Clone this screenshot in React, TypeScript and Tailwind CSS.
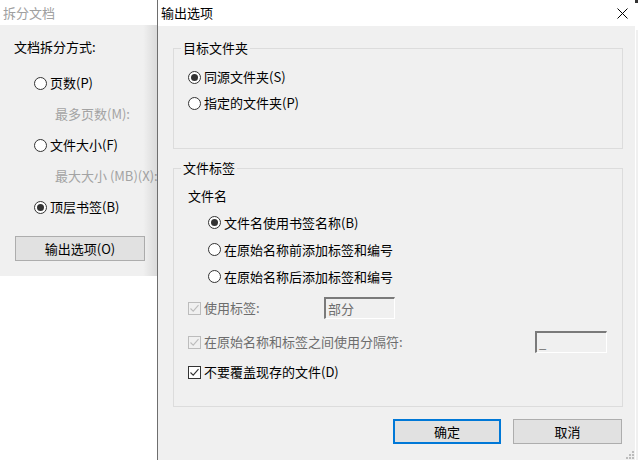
import React from "react";

const F = "[font-family:'Microsoft_YaHei','Noto_Sans_CJK_SC',sans-serif]";

function Radio({ checked }: { checked?: boolean }) {
  return (
    <span className="w-[13px] h-[13px] rounded-full border border-[#333333] bg-white flex items-center justify-center shrink-0">
      {checked && <span className="w-[7px] h-[7px] rounded-full bg-[#333333]" />}
    </span>
  );
}

function Check({ disabled }: { disabled?: boolean }) {
  const c = disabled ? "#bcbcbc" : "#333333";
  return (
    <span
      className={
        "w-[13px] h-[13px] border flex items-center justify-center shrink-0 " +
        (disabled ? "border-[#bcbcbc] bg-[#f0f0f0]" : "border-[#333333] bg-white")
      }
    >
      <svg width="11" height="11" viewBox="0 0 11 11">
        <path d="M1.5 5.5 L4.2 8.2 L9.5 2.2" stroke={c} fill="none" strokeWidth="1.1" />
      </svg>
    </span>
  );
}

function Group({
  title,
  className,
  children,
}: {
  title: string;
  className: string;
  children: React.ReactNode;
}) {
  return (
    <div className={"relative border border-[#dcdcdc] " + className}>
      <span className="absolute top-[-9px] left-[7px] px-[2px] h-[16px] leading-[16px] bg-[#f0f0f0] text-[13px] text-black">
        {title}
      </span>
      {children}
    </div>
  );
}

export default function App() {
  return (
    <div className={"relative w-[638px] h-[460px] bg-white overflow-hidden text-[13px] text-black " + F}>
      {/* Back window */}
      <div className="absolute left-0 top-0 w-[157px] h-[276px] flex flex-col">
        <div className="h-[25px] bg-white flex items-center pl-[3px] text-[#a0a0a0] leading-[16px]">拆分文档</div>
        <div className="relative flex-1 bg-[#f0f0f0] flex flex-col overflow-hidden">
          <div className="mt-[12px] h-[20px] flex items-center pl-[14px] whitespace-nowrap">文档拆分方式:</div>
          <div className="mt-[11px] h-[30px] flex items-center pl-[34px] gap-[3px] whitespace-nowrap">
            <Radio />
            <span>页数(P)</span>
          </div>
          <div className="h-[32px] flex items-center pl-[55px] text-[#a3a3a3] whitespace-nowrap">最多页数(M):</div>
          <div className="h-[30px] flex items-center pl-[34px] gap-[3px] whitespace-nowrap">
            <Radio />
            <span>文件大小(F)</span>
          </div>
          <div className="h-[32px] flex items-center pl-[55px] text-[#a3a3a3] whitespace-nowrap">最大大小 (MB)(X):</div>
          <div className="h-[30px] flex items-center pl-[34px] gap-[3px] whitespace-nowrap">
            <Radio checked />
            <span>顶层书签(B)</span>
          </div>
          <div className="mt-[14px] ml-[15px] w-[130px] h-[25px] border border-[#adadad] bg-[#e1e1e1] flex items-center justify-center">
            输出选项(O)
          </div>
          <div className="absolute right-0 top-0 bottom-0 w-[14px] bg-gradient-to-r from-[rgba(0,0,0,0)] to-[rgba(0,0,0,0.09)]" />
        </div>
      </div>

      {/* window behind on the right */}
      <div className="absolute left-[635px] top-[30px] w-[3px] h-[430px] bg-[#f0f0f0] border-l border-white" />
      <div className="absolute left-[635px] top-0 w-[3px] h-[3px] bg-[#333333]" />

      {/* Front dialog */}
      <div className="absolute left-[157px] top-0 w-[478px] h-[460px] border-l border-[#6e6e6e] flex flex-col">
        <div className="h-[26px] bg-white flex items-center justify-between pl-[3px] pr-[7px]">
          <span className="leading-[16px]">输出选项</span>
          <svg width="11" height="11" viewBox="0 0 11 11">
            <path d="M0.5 0.5 L10.5 10.5 M10.5 0.5 L0.5 10.5" stroke="#000" strokeWidth="1" />
          </svg>
        </div>
        <div className="relative flex-1 bg-[#f0f0f0] flex flex-col pl-[15px] pr-[12px]">
          <Group title="目标文件夹" className="mt-[22px] h-[101px] pt-[15px] pl-[14px]">
            <div className="h-[26px] flex items-center gap-[3px]">
              <Radio checked />
              <span>同源文件夹(S)</span>
            </div>
            <div className="h-[26px] flex items-center gap-[3px]">
              <Radio />
              <span>指定的文件夹(P)</span>
            </div>
          </Group>

          <Group title="文件标签" className="mt-[19px] h-[239px] pt-[14px] pl-[14px]">
            <div className="h-[26px] flex items-center">文件名</div>
            <div className="pl-[20px]">
              <div className="h-[27px] flex items-center gap-[3px]">
                <Radio checked />
                <span>文件名使用书签名称(B)</span>
              </div>
              <div className="h-[27px] flex items-center gap-[3px]">
                <Radio />
                <span>在原始名称前添加标签和编号</span>
              </div>
              <div className="h-[27px] flex items-center gap-[3px]">
                <Radio />
                <span>在原始名称后添加标签和编号</span>
              </div>
            </div>
            <div className="h-[36px] flex items-center gap-[3px]">
              <Check disabled />
              <span className="w-[117px] text-[#6d6d6d]">使用标签:</span>
              <div className="w-[71px] h-[22px] border-t-2 border-l-2 border-t-[#7a7a7a] border-l-[#7a7a7a] border-b border-r border-b-white border-r-white bg-[#f0f0f0] flex items-center pl-[2px] text-[#6d6d6d]">
                部分
              </div>
            </div>
            <div className="h-[32px] flex items-center gap-[3px]">
              <Check disabled />
              <span className="w-[328px] text-[#6d6d6d] whitespace-nowrap">在原始名称和标签之间使用分隔符:</span>
              <div className="w-[72px] h-[22px] border-t-2 border-l-2 border-t-[#7a7a7a] border-l-[#7a7a7a] border-b border-r border-b-white border-r-white bg-[#f0f0f0] flex items-center pl-[2px] text-[#6d6d6d]">
                _
              </div>
            </div>
            <div className="h-[28px] flex items-center gap-[3px]">
              <Check />
              <span>不要覆盖现存的文件(D)</span>
            </div>
          </Group>

          <div className="mt-[12px] flex justify-end gap-[12px] pr-[1px]">
            <div className="w-[108px] h-[25px] border-2 border-[#0078d7] bg-[#e1e1e1] flex items-center justify-center">确定</div>
            <div className="w-[109px] h-[25px] border border-[#adadad] bg-[#e1e1e1] flex items-center justify-center">取消</div>
          </div>

          <svg className="absolute right-[1px] bottom-[1px]" width="8" height="8" viewBox="0 0 8 8">
            <rect x="6" y="0" width="2" height="2" fill="#bcbcbc" />
            <rect x="3" y="3" width="2" height="2" fill="#bcbcbc" />
            <rect x="6" y="3" width="2" height="2" fill="#bcbcbc" />
            <rect x="0" y="6" width="2" height="2" fill="#bcbcbc" />
            <rect x="3" y="6" width="2" height="2" fill="#bcbcbc" />
            <rect x="6" y="6" width="2" height="2" fill="#bcbcbc" />
          </svg>
        </div>
      </div>
    </div>
  );
}
